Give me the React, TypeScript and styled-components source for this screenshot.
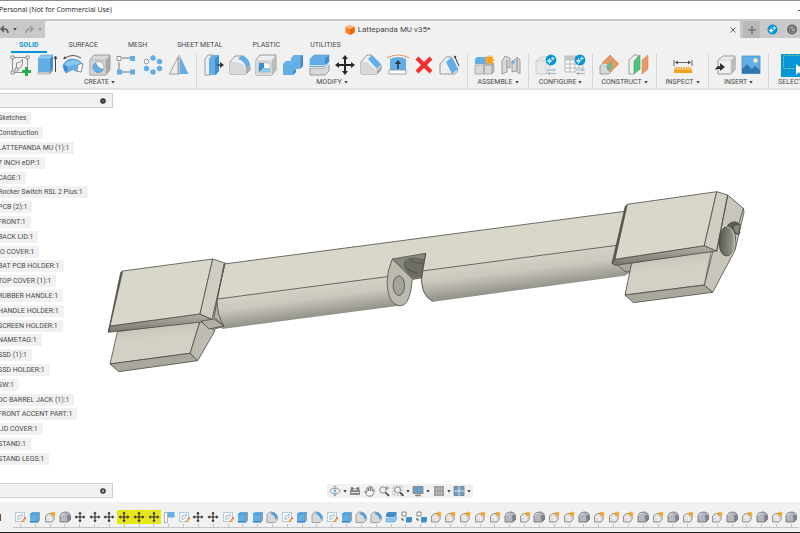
import React from "react";
import styled, { createGlobalStyle, css } from "styled-components";

const Global = createGlobalStyle`
  *, *::before, *::after { box-sizing: border-box; }
  body { margin: 0; background: #fff; overflow: hidden; }
  button { font: inherit; color: inherit; border: 0; padding: 0; margin: 0; background: none; cursor: pointer; }
  svg { display: block; flex: none; }
`;

const Page = styled.div`
  min-height: 100vh;
  display: flex;
  flex-direction: column;
  overflow: hidden;
  border-top: 1px solid #8c8c8c;
  border-bottom: 1px solid #1c1c1c;
  font-family: Roboto, "Liberation Sans", sans-serif;
  font-size: 7px;
  line-height: 12px;
  color: #4a4a4a;
`;

const TitleBar = styled.header`
  height: 18px;
  display: flex;
  align-items: center;
  justify-content: space-between;
  font-family: "Open Sans", "Noto Sans", sans-serif;
  color: #222;
  white-space: nowrap;
`;
const WindowTitle = styled.span`margin-left: -1px;`;
const Minimize = styled.button`
  width: 2px;
  height: 1px;
  background: #555;
`;

const DocBar = styled.div`
  height: 19px;
  display: flex;
  background: #c9c9c9;
  padding-top: 2px;
`;
const History = styled.div`
  width: 45px;
  display: flex;
  align-items: center;
  gap: 4px;
`;
const DocTab = styled.div`
  flex: 1;
  display: flex;
  align-items: center;
  background: #f1f1f1;
  border-radius: 2px 2px 0 0;
  padding-right: 4px;
  font-size: 8px;
`;
const DocName = styled.div`
  flex: 1;
  display: flex;
  align-items: center;
  justify-content: center;
  gap: 3px;
`;
const DocActions = styled.div`
  width: 60px;
  display: flex;
  align-items: center;
  padding-left: 3px;
  gap: 7px;
`;
const NewTab = styled.button`
  width: 17px;
  height: 17px;
  display: grid;
  place-items: center;
  background: #b8b8b8;
  border-radius: 2px 2px 0 0;
`;

const Ribbon = styled.div`
  height: 52px;
  background: #f1f1f1;
  border-bottom: 2px solid #e2e2e2;
  overflow: hidden;
`;
const Tabs = styled.nav`
  height: 15px;
  display: flex;
  gap: 14px;
  padding-left: 11px;
`;
const Tab = styled.button<{ $on?: boolean }>`
  padding: 1px 8px 0;
  height: 15px;
  line-height: 12px;
  white-space: nowrap;
  border-bottom: 2px solid transparent;
  ${(p) => p.$on && css`color: #0696d7; font-weight: 700; border-color: #0696d7;`}
`;
const Groups = styled.div`
  display: flex;
  padding-top: 1px;
`;
const Group = styled.section<{ $w: number }>`
  flex: none;
  width: ${(p) => p.$w}px;
  height: 34px;
  padding: 0 6px;
  border-right: 1px solid #d4d4d4;
  display: flex;
  flex-direction: column;
  align-items: center;
  &:first-child { padding-left: 9px; }
`;
const Tools = styled.div`
  align-self: stretch;
  height: 22px;
  display: flex;
  justify-content: space-between;
  & > :only-child { margin: 0 auto; }
`;
const GroupLabel = styled.button`
  display: flex;
  align-items: center;
  gap: 2px;
  height: 12px;
  white-space: nowrap;
`;
const SelectGroup = styled.section`
  flex: 1;
  min-width: 0;
  padding-left: 9px;
  overflow: hidden;
`;
const SelectTool = styled.button`
  display: block;
  width: 34px;
  height: 24px;
  margin: -1px 0 -1px 3px;
  background: #0696d7;
`;

const Viewport = styled.main`
  flex: 1;
  display: grid;
  grid-template: 1fr / 1fr;
  min-height: 0;
  & > * { grid-area: 1 / 1; min-height: 0; min-width: 0; }
`;
const Scene = styled.svg`
  width: 100%;
  height: 100%;
`;
const Sidebar = styled.aside`
  display: flex;
  flex-direction: column;
  width: 113px;
  padding: 3px 0 4px;
`;
const PanelHead = styled.div`
  height: 15px;
  flex: none;
  display: flex;
  align-items: center;
  justify-content: flex-end;
  padding-right: 6px;
  background: #f1f1f1;
  border: solid #cfcfcf;
  border-width: 1px 1px 1px 0;
`;
const Tree = styled.ul`
  flex: 1;
  list-style: none;
  margin: 3px 0 17px;
  padding: 0;
  display: flex;
  flex-direction: column;
`;
const Node = styled.li`
  flex: 1;
  display: flex;
  align-items: center;
`;
const NodeLabel = styled.button`
  margin-left: -2px;
  padding-right: 5px;
  height: 12px;
  background: #f1f1f1;
  white-space: nowrap;
`;
const NavBar = styled.div`
  align-self: end;
  justify-self: center;
  margin-bottom: 4px;
  width: 146px;
  height: 14px;
  padding: 0 2px;
  display: flex;
  align-items: center;
  justify-content: space-between;
  background: #f1f1f1;
`;
const NavTool = styled.button`
  display: flex;
  align-items: center;
  gap: 2px;
`;

const TimelineBar = styled.footer`
  height: 30px;
  display: flex;
  background: #f1f1f1;
  padding-top: 8px;
`;
const Handle = styled.span`
  width: 1px;
  height: 7px;
  margin: 4px 12px 0 0;
  background: #555;
`;
const Track = styled.div`
  flex: 1;
  height: 18px;
  display: flex;
  margin-right: 1px;
  border-bottom: 1px solid #c4c4c4;
`;
const Step = styled.button<{ $hot?: boolean }>`
  height: 15px;
  min-width: 0;
  display: grid;
  place-items: center;
  background: ${(p) => (p.$hot ? "#e6e619" : "none")};
`;
const StepCell = styled.div`
  flex: 1;
  min-width: 0;
  display: flex;
  flex-direction: column;
  align-items: stretch;
  &::after {
    content: "";
    width: 1px;
    height: 3px;
    margin: 0 auto;
    background: #c4c4c4;
  }
`;

const B = "#62aee6";
const BD = "#3f8dc8";
const BL = "#8cc8f0";
const G = "#d9d9d9";
const GD = "#8c8c8c";
const GL = "#efefef";

const Caret = ({ light }: { light?: boolean }) => (
  <svg width="4" height="3" viewBox="0 0 4 3"><path d="M.300 0h3.400L2 2.700z" fill={light ? "#999" : "#444"} /></svg>
);

const arrows = "M11 1l3 4h-2v5h5V8l4 3-4 3v-2h-5v5h2l-3 4-3-4h2v-5H5v2l-4-3 4-3v2h5V5H8z";
const star = (x: number, y: number, r: number) => (
  <g transform={`translate(${x} ${y})`} stroke="#f7a11b" strokeWidth={r / 3}>
    <path d={`M${-r} 0H${r}M0 ${-r}V${r}M${-r * 0.7} ${-r * 0.7}L${r * 0.7} ${r * 0.7}M${-r * 0.7} ${r * 0.7}L${r * 0.7} ${-r * 0.7}`} />
    <circle r={r * 0.5} fill="#f7a11b" />
  </g>
);
const gear = (
  <g>
    <circle cx="16" cy="6" r="5.400" fill="#0696d7" />
    <circle cx="14.500" cy="7" r="1.500" fill="#fff" />
    <path d="M14.500 4.500v5M12 7h5M17.800 2.800v3.400M16.100 4.500h3.400" stroke="#fff" strokeWidth=".9" />
    <circle cx="14.500" cy="7" r=".6" fill="#0696d7" />
  </g>
);
const sliders = <path d="M12 16h9M12 19.500h9M18.500 14.500v3M14.500 18v3" stroke="#9cb2c2" strokeWidth="1" />;

const glyphs: Record<string, React.ReactNode> = {
  sketch: (
    <g fill="none" stroke="#777" strokeWidth=".8">
      <path d="M5 3.500h12M3.500 5v12M5 18.500h8M18.500 5v8" />
      <path d="M7.500 14V9q4.500-.500 6-3.500V10q-1 4-4.500 5z" />
      <g fill="#fff"><path d="M2 2h3v3H2zM17 2h3v3h-3zM2 17h3v3H2zM6 14h3v3H6z" /></g>
      <path d="M13 17.500h9M17.500 13v9" stroke="#25ae4b" strokeWidth="3" />
    </g>
  ),
  extrude: (
    <g>
      <path d="M2 5l3-4h12l-3 4z" fill={BL} stroke={BD} strokeWidth=".5" />
      <path d="M2 5h12v13H2z" fill={B} />
      <path d="M14 5l3-4v13l-3 4z" fill={BD} />
      <path d="M2 18h12v2H2z" fill={G} stroke={GD} strokeWidth=".5" />
      <path d="M14 18l3-4v2.500l-3 3.500z" fill={GD} />
      <path d="M19.500 18V3M18 5l1.500-3L21 5" stroke="#444" fill="none" />
    </g>
  ),
  revolve: (
    <g>
      <path d="M1 11Q5 4.500 11 5t10 5l-2 8-5-1q-3-3-6 0l-4 2z" fill={B} stroke={BD} strokeWidth=".6" />
      <path d="M3 10q8-7 16-1l-4 2q-4-2-9 2z" fill={BL} />
      <path d="M1 11q4 0 5 3l-2 5q-3-3-3-8z" fill={BD} />
      <path d="M16 11q3-2 5-1l-2 8-4-1z" fill="#fff" stroke="#777" strokeWidth=".7" />
      <path d="M3 4Q11-1 19 4" stroke="#444" fill="none" strokeWidth=".9" /><path d="M1 5l2-3 1 3z" fill="#444" />
    </g>
  ),
  hole: (
    <g>
      <path d="M1 6l4-5h16v15l-4 5H1z" fill={G} stroke={GD} strokeWidth=".8" />
      <path d="M17 6l4-5v15l-4 5z" fill="#a8a8a8" /><path d="M1 6h16v15H1z" fill="#d2d2d2" stroke="#aaa" strokeWidth=".5" />
      <circle cx="9.500" cy="13" r="5.500" fill="#fff" stroke="#888" strokeWidth=".7" />
      <path d="M7 9a5 5 0 1 0 7 6q-5-.500-7-6z" fill={B} stroke={BD} strokeWidth=".5" />
    </g>
  ),
  rect: (
    <g>
      <path d="M4 8v9M7 4h8M7 18h8" stroke="#777" fill="none" /><path d="M2 2.500h4v4H2z" fill="#fff" stroke="#777" strokeWidth=".8" />
      <path d="M15 2h5v5h-5zM15 15.500h5v5h-5zM2 15.500h5v5H2z" fill={B} />
    </g>
  ),
  circ: (
    <g fill={B}>
      <circle cx="11" cy="4" r="2.700" /><circle cx="17.500" cy="7.500" r="2.700" /><circle cx="17.500" cy="14.500" r="2.700" />
      <circle cx="11" cy="18" r="2.700" /><circle cx="4.500" cy="14.500" r="2.700" />
      <circle cx="4.500" cy="7.500" r="2.300" fill="#fff" stroke="#777" strokeWidth=".8" />
    </g>
  ),
  mirror: (
    <g><path d="M10 3v17H1.500z" fill={GL} stroke={GD} strokeWidth=".8" /><path d="M12 2l8.500 18H12z" fill={B} /><path d="M11 1v20" stroke="#888" strokeWidth=".8" /></g>
  ),
  press: (
    <g>
      <path d="M2 5l3-4h5v16l-3 4H2z" fill={GL} stroke={GD} strokeWidth=".8" /><path d="M6 5l3-4h7v16l-3 4H6z" fill={B} />
      <path d="M12 5l4-4v16l-4 4z" fill={BD} /><path d="M14 11h4" stroke="#333" strokeWidth="1.200" /><path d="M17 8l4 3-4 3z" fill="#333" />
    </g>
  ),
  fillet: (
    <g>
      <path d="M1 8l5-6h6q8 3 9 11v3l-4 4H1z" fill={GL} stroke={GD} strokeWidth=".9" />
      <path d="M17 14l4-3v5l-4 4z" fill="#aaa" /><path d="M1 8h6q8 1 10 7v5H1z" fill={G} />
      <path d="M9 5l4-4q7 3 8 10l-4 3q-1-7-8-9z" fill={B} />
    </g>
  ),
  shell: (
    <g>
      <path d="M1 6l4-5h16v15l-4 5H1z" fill={GL} stroke={GD} strokeWidth=".9" /><path d="M17 6l4-5v15l-4 5z" fill="#bbb" />
      <path d="M1 6h16v15H1z" fill={G} /><path d="M4 9h11v9H4z" fill="#fff" stroke="#999" strokeWidth=".5" />
      <path d="M4 9h5v5l-5 4z" fill={BD} /><path d="M4 18l5-4h6v4z" fill={BL} />
    </g>
  ),
  combine: (
    <g><path d="M1 10l3-3h5V4l3-3h9v11l-3 3h-4v3l-3 3H1z" fill={B} /><path d="M18 4l3-3v11l-3 3zM11 18l3-3v3l-3 3z" fill={BD} /><path d="M9 4h9v11M1 10h8V4" fill="none" stroke={BL} strokeWidth=".6" /></g>
  ),
  split: (
    <g>
      <path d="M2 5l4-4h15v7l-4 3H2z" fill={B} stroke={BD} strokeWidth=".5" /><path d="M17 5l4-4v7l-4 3z" fill={BD} />
      <path d="M2 14h15l4-4v7l-4 4H2z" fill={G} stroke={GD} strokeWidth=".8" /><path d="M0 12.500h17l5-4" fill="none" stroke="#fff" strokeWidth="2" />
      <path d="M1 12.500h16l4-4" fill="none" stroke={B} strokeWidth="1" />
    </g>
  ),
  move: <path d={arrows} fill="#262626" />,
  chamfer: (
    <g>
      <path d="M1 8l6-7h4l10 10v5l-4 4H1z" fill={GL} stroke={GD} strokeWidth=".9" /><path d="M1 8h6l10 9v3H1z" fill={G} />
      <path d="M17 16l4-4v4l-4 4z" fill="#aaa" /><path d="M8 5l4-4 9 9-4 5z" fill={B} />
    </g>
  ),
  replace: (
    <g>
      <path d="M0 4q11-6 22 0" fill="none" stroke="#e69a66" strokeWidth="1.200" /><path d="M3 5q8-4 16 0v11H3z" fill={B} />
      <path d="M2 16h17v4H2z" fill="#fff" stroke={GD} strokeWidth=".8" /><path d="M11 15V8" stroke="#333" strokeWidth="1.500" /><path d="M8 10l3-4 3 4z" fill="#333" />
    </g>
  ),
  remove: <path d="M4 4l14 14M18 4L4 18" stroke="#f4302e" strokeWidth="4.200" />,
  draft: (
    <g>
      <path d="M1 10l6-7h5l7 13-3 4H1z" fill={GL} stroke={GD} strokeWidth=".9" /><path d="M7 8l6-5 6 12-6 5z" fill={B} />
      <path d="M16 3l4 9" stroke="#333" strokeWidth="1" /><path d="M14.500 1.500l3 1-1.500 2z" fill="#333" />
    </g>
  ),
  component: (
    <g>
      <path d="M1 5l2-2h9v7H1z" fill={B} /><path d="M1 11h9v9H1zM10 11h8v9h-8z" fill={G} stroke="#999" strokeWidth=".7" />
      <path d="M18 11l2-2v9l-2 2zM10 11l2-2h8l-2 2z" fill="#bbb" stroke="#999" strokeWidth=".5" />{star(15.5, 6, 4.8)}
    </g>
  ),
  joint: (
    <g>
      <path d="M2 7l3-5 5 2v10l-3-1v5l-5 2z" fill={G} stroke={GD} strokeWidth=".8" /><path d="M12 9l5-6 3 3v14l-4-3-4 1z" fill={G} stroke={GD} strokeWidth=".8" />
      <path d="M7 6v7M17 5v12" stroke="#999" strokeWidth="1.300" /><circle cx="13" cy="8" r="1.800" fill={B} />
    </g>
  ),
  config: <g><path d="M1 7l5-4h9v13l-4 4H1z" fill="#e8e8e8" stroke="#c8c8c8" strokeWidth=".8" /><path d="M1 7h10v13" fill="none" stroke="#d0d0d0" />{sliders}{gear}</g>,
  table: <g><path d="M1 2h18v16H1zM1 6h18M1 10h18M1 14h18M6 6v12M11 6v12M15 6v12" fill="#f7f7f7" stroke="#b5b5b5" strokeWidth=".9" /><path d="M1 2h18v4H1z" fill="#c6c6c6" /><path d="M12 15h10v6H12z" fill="#f1f1f1" />{sliders}{gear}</g>,
  plane: (
    <g><path d="M1 12l4-4h8v9l-3 3H1z" fill={G} stroke={GD} strokeWidth=".8" /><path d="M3 9l8-8 9 9-9 8-3-3 3-5z" fill="#e59a68" stroke="#d4804a" strokeWidth=".6" /><path d="M7 12l6-5v7l-4 3z" fill="#69b98a" /></g>
  ),
  mid: (
    <g><path d="M1 6l5-5h4v15l-5 4H1z" fill={GL} stroke={GD} strokeWidth=".8" /><path d="M6 7l6-6v14l-6 5z" fill="#4fc37d" stroke="#3d9d62" strokeWidth=".6" /><path d="M14 6l6-5v14l-6 5z" fill="#e59a68" stroke="#d4804a" strokeWidth=".5" /></g>
  ),
  measure: (
    <g><path d="M2 6v6M20 6v6M3 8.500h16" stroke="#555" strokeWidth=".9" /><path d="M3 8.500l3-2v4zM19 8.500l-3-2v4z" fill="#555" /><path d="M2 13h18v3H2z" fill="#fbd98e" /><path d="M2 15.500h18V19H2z" fill="#f2a01d" /><path d="M4.500 13v2M7 13v2M9.500 13v2M12 13v2M14.500 13v2M17 13v2" stroke="#b97b1c" strokeWidth=".6" /></g>
  ),
  insert: (
    <g><path d="M3 6l5-4h12v14l-4 4H3z" fill={GL} stroke={GD} strokeWidth=".9" /><path d="M16 6l4-4v14l-4 4z" fill="#bbb" /><path d="M3 6h13v14" fill="none" stroke="#ccc" strokeWidth=".8" /><path d="M0 16q1-4 5-4V9l5 4-5 4v-2q-3-.500-5 1z" fill="#333" /></g>
  ),
  picture: (
    <g><path d="M2 2h18v17.500H2z" fill={B} stroke="#4a95cd" strokeWidth=".8" /><path d="M2 15l5-5 5 5 3-3 5 4v3.500H2z" fill="#2f78ad" /><circle cx="15.500" cy="6.500" r="2.200" fill="#fff5c4" /></g>
  ),
};

const Icon = ({ name, size = 22 }: { name: string; size?: number }) => (
  <svg width={size} height={size} viewBox="0 0 22 22" aria-hidden="true">{glyphs[name]}</svg>
);

const groups = [
  { label: "CREATE", w: 197, tools: ["sketch", "extrude", "revolve", "hole", "rect", "circ", "mirror"] },
  { label: "MODIFY", w: 271, tools: ["press", "fillet", "shell", "combine", "split", "move", "chamfer", "replace", "remove", "draft"] },
  { label: "ASSEMBLE", w: 61, tools: ["component", "joint"] },
  { label: "CONFIGURE", w: 64, tools: ["config", "table"] },
  { label: "CONSTRUCT", w: 64, tools: ["plane", "mid"] },
  { label: "INSPECT", w: 52, tools: ["measure"] },
  { label: "INSERT", w: 60, tools: ["insert", "picture"] },
];

const nodes = [
  "Sketches", "Construction", "LATTEPANDA MU (1):1", "7 INCH eDP:1", "CAGE:1", "Rocker Switch RSL 2 Plus:1",
  "PCB (2):1", "FRONT:1", "BACK LID:1", "IO COVER:1", "BAT PCB HOLDER:1", "TOP COVER (1):1", "RUBBER HANDLE:1",
  "HANDLE HOLDER:1", "SCREEN HOLDER:1", "NAMETAG:1", "SSD (1):1", "SSD HOLDER:1", "SW:1", "DC BARREL JACK (1):1",
  "FRONT ACCENT PART:1", "LID COVER:1", "STAND:1", "STAND LEGS:1",
];

const stepGlyphs: Record<string, { name: string; art: React.ReactNode }> = {
  s: { name: "Sketch", art: <g><path d="M1.500 1.500h9v9h-9z" fill="#fafafa" stroke="#8cb8da" strokeDasharray="2 1" /><path d="M4 8.500V5q3 0 4-2v3q-1 2-4 2.500z" fill="none" stroke="#7d9db5" strokeWidth=".7" /><path d="M7 10.500l3-3.500 1.500 1.500-3 3z" fill="#f2a64a" /><path d="M10 7l1-1 1.300 1.300-1 1z" fill="#e0523f" /></g> },
  e: { name: "Extrude", art: <g><path d="M1 3l2-2h8v8l-2 2.500H1z" fill={B} /><path d="M1 3h8l2-2M9 3v8" fill="none" stroke={BD} strokeWidth=".8" /><path d="M1 10h8v1.500H1z" fill={BD} /><path d="M9 3l2-2v8l-2 2.500z" fill="#8fa1b0" /></g> },
  g: { name: "New component", art: <g><path d="M1.500 5l3-2.500H9q2 3 1 6l-2 2.500H1.500z" fill="#dedede" stroke="#8a8a8a" strokeWidth=".9" /><path d="M3 6h3.500v4" fill="none" stroke="#fff" strokeWidth=".8" />{star(9, 3, 2.6)}</g> },
  b: { name: "Body", art: <g><path d="M1 5q1-4 5-4 5 0 5.500 4v3.500L9 11H1z" fill="#b3b7c1" stroke="#777" strokeWidth=".9" /><path d="M8 4q3-.500 3.500 1v3.500L8.500 11z" fill="#7d828c" /><path d="M2 5q1-3 3.500-3" stroke="#e2e4e8" fill="none" /></g> },
  m: { name: "Move", art: <g transform="scale(.545)"><path d={arrows} fill="#262626" /></g> },
  p: { name: "Plane", art: <g><path d="M1.500 1.500h3v10h-3z" fill="#fff" stroke="#9a9a9a" strokeWidth=".8" /><path d="M5 1h6.500v5.500H5z" fill={B} /></g> },
  f: { name: "Fillet", art: <g><path d="M1 4l2.500-3H6q5 1 5.500 6v2L9 11.500H1z" fill="#dadada" stroke="#909090" strokeWidth=".8" /><path d="M4.500 3l1.500-2q5 1 5.500 6L9.500 8.500Q9 4 4.500 3z" fill="#4b9fdc" /></g> },
  x: { name: "Split", art: <g><path d="M1 3l2-2h8.500v3l-2 2H1z" fill={BD} /><path d="M1 8l2-1h6.500l2-2v3.500l-2 2.500H1z" fill={BL} stroke={BD} strokeWidth=".5" /></g> },
  c: { name: "Copy", art: <g><path d="M2 1h4v4H2z" fill="#fff" stroke="#777" strokeWidth=".9" /><path d="M6 7l1-1h5v4l-1 1.500H6z" fill={BD} /><path d="M2 7v2h2" fill="none" stroke="#444" /></g> },
};
const timeline = "segbmmmMMMpsmmseefsefseffxccgggggbgbggbgggbgbgbgbgbgb".split("");

const nav: { name: string; menu?: boolean; art: React.ReactNode }[] = [
  { name: "Orbit", menu: true, art: <g fill="none" stroke="#888" strokeWidth=".8"><ellipse cx="6" cy="6" rx="5" ry="2.500" /><path d="M4.500 2.500L6 .800l1.500 1.700M4.500 9.500L6 11.200l1.500-1.700M6 1v3M6 8v3" /><circle cx="6" cy="6" r="1.300" fill={B} stroke="none" /></g> },
  { name: "Look at", art: <g><path d="M1 5h10v5H1z" fill="#898989" /><path d="M2 2.500h2V5H2zM8 2.500h2V5H8zM4 3.500h4" fill="#777" stroke="#777" strokeWidth=".6" /><path d="M2 7.500h8" stroke="#ddd" /></g> },
  { name: "Pan", art: <path d="M3.500 11Q1 8 1 6l2 1.500V3q1-1 1.300 0V6L5 1.500q1-1 1.300 0V6l1-4q1-.500 1 .500L8 6.500l1.500-2q1-.200.800.800L9 9.500 8 11z" fill="#fff" stroke="#666" strokeWidth=".8" /> },
  { name: "Zoom", art: <g><circle cx="5" cy="5" r="3.200" fill="#e9f1f6" stroke="#888" /><path d="M7.500 7.500l3.500 3.500" stroke="#444" strokeWidth="1.700" /><path d="M9 1v4M7.500 3h4" stroke="#777" strokeWidth=".7" /></g> },
  { name: "Fit", menu: true, art: <g><path d="M1 1h9v9H1z" fill="none" stroke="#999" strokeWidth=".7" strokeDasharray="2 1" /><circle cx="5.500" cy="5" r="3" fill="#e9f1f6" stroke="#888" /><path d="M8 7.500l3.500 3.500" stroke="#444" strokeWidth="1.700" /></g> },
  { name: "Display", menu: true, art: <g><path d="M1 1.500h10v7H1z" fill="#6e9cc3" stroke="#888" strokeWidth=".9" /><path d="M3 10.500h6M6 9v2" stroke="#888" strokeWidth="1.300" /></g> },
  { name: "Grid", menu: true, art: <g><path d="M1 1h10v10H1z" fill="#959595" /><path d="M3.500 1v10M6 1v10M8.500 1v10M1 4h10M1 8h10" stroke="#d4d4d4" strokeWidth=".6" /></g> },
  { name: "Viewports", menu: true, art: <g><path d="M1 1.500h10v9H1z" fill="#6e9cc3" stroke="#70777d" strokeWidth=".8" /><path d="M6 1v10M1 6h10" stroke="#e6edf2" strokeWidth=".9" /></g> },
];

const Model = () => (
  <Scene viewBox="0 90 800 412" role="img" aria-label="3D model of the stand">
    <defs>
      <linearGradient id="tube" gradientUnits="userSpaceOnUse" x1="500" y1="260" x2="504" y2="292">
        <stop offset="0" stopColor="#d4d2c7" /><stop offset=".4" stopColor="#cbc9be" /><stop offset="1" stopColor="#93928a" />
      </linearGradient>
      <linearGradient id="tubeLeft" gradientUnits="userSpaceOnUse" x1="300" y1="288" x2="304" y2="318">
        <stop offset="0" stopColor="#d4d2c7" /><stop offset=".4" stopColor="#cbc9be" /><stop offset="1" stopColor="#93928a" />
      </linearGradient>
      <linearGradient id="under" x1="0" y1="0" x2="0" y2="1"><stop offset="0" stopColor="#b5b3a8" /><stop offset="1" stopColor="#76756c" /></linearGradient>
      <linearGradient id="block" x1="0" y1="0" x2=".2" y2="1"><stop offset="0" stopColor="#bfbdb2" /><stop offset=".5" stopColor="#d3d1c5" /></linearGradient>
      <linearGradient id="bore" x1="0" y1="0" x2="1" y2="0"><stop offset="0" stopColor="#55554f" /><stop offset=".8" stopColor="#92918a" /><stop offset="1" stopColor="#c0beb4" /></linearGradient>
    </defs>
    <g stroke="#4b4b46" strokeWidth=".8" strokeLinejoin="round">
      <path d="M218 298.500L388 276l13 29.500L222 329l-5-9z" fill="url(#tubeLeft)" stroke="none" />
      <path d="M422 271l195-26 14 27-6 3.700-191.700 26Q424 298 421.500 286t.500-15z" fill="url(#tube)" stroke="none" />
      <path d="M224 264l403-53-10 34.300-195 26 3.700-18L392.300 259l-4.600 17.600L217.500 299z" fill="#d9d7ca" stroke="none" />
      <path d="M224 264l403-53M217.500 299l170-22.400M422 271l195-25.700" fill="none" />
      <path d="M392.300 259l33.400-5.700-4 24.500-8.500 1.500z" fill="#8a8980" />
      <path d="M404 264q5-7 17-4l3-1-2 18-9 1q-9-7-9-14z" fill="#6f6e66" stroke="none" />
      <path d="M423.500 260q-15-5-19.500 3 1 8 14 10M409 259q5 5 14 4" fill="none" />
      <path d="M392.300 259Q387 271 387 283q1 21 12 22.700 11 1.300 13-25l1-1.400z" fill="#bdbbb0" />
      <ellipse cx="398.800" cy="285.700" rx="5.700" ry="9.800" fill="#a4a39b" />
      <path d="M425.700 253.300l-3.700 18q-1.500 10 1 18t10 12.300" fill="none" />

      <path d="M225 263l-8 36q0 17 7 27l-12 4-10-9 10-6z" fill="#b4b2a8" />
      <path d="M200 321l15 9.700-17.300 30-7.700-7.400z" fill="#bebcb1" />
      <path d="M117.500 331.500L200 320.500l-10 32.800L110 364z" fill="url(#block)" />
      <path d="M110 364l80-10.700 7.700 7.400-79 11z" fill="#aaa89c" />
      <path d="M110 326l90-12 12 5.300-4 2-99.700 11z" fill="url(#under)" />
      <path d="M122.700 271l-2 1.500-12.400 59.500 1.700-6z" fill="#5b5b55" />
      <path d="M122.700 271l90-12L200 314l-90 12z" fill="#d9d7ca" />
      <path d="M212.700 259l12.300 4-13 56.300L200 314z" fill="#d0cec2" />
      <path d="M224 264l-10 53 10 9" fill="none" />
      <path d="M201 321l8 8 15-3-10-7z" fill="#b2b0a6" />

      <path d="M616 264l10 8 7-1 2-12z" fill="#aaa89e" />
      <path d="M727.700 195l15.600 13.300.7 4-4 17-5 21-22.300 42-8.400-7.300 9-35z" fill="#c8c6ba" />
      <path d="M631.700 263l80-13-7.400 35L625 295z" fill="url(#block)" />
      <path d="M625 295l79.300-10 8.400 7.300-79.400 10.400z" fill="#aaa89c" />
      <path d="M615 259.300l89.300-13.600 12.400 5.300L615 265.300l-3-2z" fill="url(#under)" />
      <path d="M627.300 204.300l-2 2L612 263.300l3-4z" fill="#5b5b55" />
      <path d="M627.300 204.300l89.400-12.600-12.400 54L615 259.300z" fill="#d9d7ca" />
      <path d="M716.700 191.700l11 3.300-11 56-12.400-5.300z" fill="#d0cec2" />
      <path d="M725 229q6-10 13-6l2 10q-3 3-6-1z" fill="#5d5c55" />
      <path d="M733 227q3-3 7-3l-1 10q-5 0-6-7z" fill="#87857c" />
      <ellipse cx="727.300" cy="241" rx="8.300" ry="15" fill="url(#bore)" transform="rotate(4 727.300 241)" />
      <path d="M725 226q9 1 10 16-1 10-5 14" fill="none" stroke="#d0cec4" />
      <path d="M727.700 195l-11 56M743.300 208.300l-5 17" fill="none" />
    </g>
  </Scene>
);

export default function App() {
  return (
    <Page>
      <Global />
      <TitleBar>
        <WindowTitle>Personal (Not for Commercial Use)</WindowTitle>
        <Minimize aria-label="Minimize" />
      </TitleBar>
      <DocBar>
        <History>
          <button aria-label="Undo"><svg width="9" height="10" viewBox="0 0 9 10"><path d="M1 4h4q3 .500 3 4M4 1L1 4l3 3" fill="none" stroke="#555" strokeWidth="1.400" /></svg></button>
          <button aria-label="Undo history"><Caret /></button>
          <span />
          <button aria-label="Redo"><svg width="9" height="10" viewBox="0 0 9 10"><path d="M8 4H4Q1 4.500 1 8M5 1l3 3-3 3" fill="none" stroke="#999" strokeWidth="1.400" /></svg></button>
          <button aria-label="Redo history"><Caret light /></button>
        </History>
        <DocTab>
          <DocName>
            <svg width="10" height="10" viewBox="0 0 10 10"><path d="M5 0l4.500 2v5.500L5 10 .500 7.500V2z" fill="#ff7a1c" /><path d="M5 0l4.500 2L5 4.500.500 2z" fill="#ffb57c" /><path d="M5 4.500L9.500 2v5.500L5 10z" fill="#f26000" /></svg>
            Lattepanda MU v35*
          </DocName>
          <button aria-label="Close document"><svg width="6" height="6" viewBox="0 0 6 6"><path d="M.500.500l5 5M5.500.500l-5 5" stroke="#666" strokeWidth="1" /></svg></button>
        </DocTab>
        <DocActions>
          <NewTab aria-label="New design"><svg width="8" height="8" viewBox="0 0 8 8"><path d="M4 0v8M0 4h8" stroke="#777" strokeWidth="1.600" /></svg></NewTab>
          <button aria-label="Extensions"><svg width="11" height="11" viewBox="0 0 11 11"><circle cx="5.500" cy="5.500" r="5" fill="#0696d7" /><circle cx="4.200" cy="6.500" r="1.400" fill="#fff" /><path d="M4.200 4.300v4.400M2 6.500h4.400M7.300 2.500v3.200M5.700 4.100h3.200" stroke="#fff" strokeWidth=".9" fill="none" /></svg></button>
          <button aria-label="Job status"><svg width="13" height="11" viewBox="0 0 13 11"><circle cx="7" cy="5.500" r="5" fill="#666" /><circle cx="7" cy="5.500" r="3" fill="none" stroke="#aaa" strokeWidth=".8" /><path d="M7 3v3h2.500" stroke="#ddd" strokeWidth=".9" fill="none" /></svg></button>
        </DocActions>
      </DocBar>
      <Ribbon>
        <Tabs>
          {["SOLID", "SURFACE", "MESH", "SHEET METAL", "PLASTIC", "UTILITIES"].map((t, i) => <Tab key={t} $on={i === 0}>{t}</Tab>)}
        </Tabs>
        <Groups>
          {groups.map((g) => (
            <Group key={g.label} $w={g.w}>
              <Tools>{g.tools.map((t) => <button key={t} aria-label={t}><Icon name={t} /></button>)}</Tools>
              <GroupLabel>{g.label} <Caret /></GroupLabel>
            </Group>
          ))}
          <SelectGroup>
            <SelectTool aria-label="Select">
              <svg width="34" height="24" viewBox="0 0 34 24"><path d="M2.500 2.500h29v13h-29z" fill="none" stroke="#63c391" strokeDasharray="3 1" /><path d="M15 11v11l3-3 2 4 2-1-2-4h4z" fill="#fff" /></svg>
            </SelectTool>
            <GroupLabel>SELECT <Caret /></GroupLabel>
          </SelectGroup>
        </Groups>
      </Ribbon>
      <Viewport>
        <Model />
        <Sidebar>
          <PanelHead>
            <button aria-label="Collapse browser"><svg width="6" height="6" viewBox="0 0 6 6"><circle cx="3" cy="3" r="2.800" fill="#333" /><path d="M1.500 3h3" stroke="#aaa" strokeWidth=".8" /></svg></button>
          </PanelHead>
          <Tree>{nodes.map((n) => <Node key={n}><NodeLabel>{n}</NodeLabel></Node>)}</Tree>
          <PanelHead>
            <button aria-label="Expand comments"><svg width="6" height="6" viewBox="0 0 6 6"><circle cx="3" cy="3" r="2.800" fill="#333" /><path d="M1.500 3h3M3 1.500v3" stroke="#ccc" strokeWidth=".9" /></svg></button>
          </PanelHead>
        </Sidebar>
        <NavBar>
          {nav.map((n) => (
            <NavTool key={n.name} aria-label={n.name}>
              <svg width="12" height="12" viewBox="0 0 12 12">{n.art}</svg>
              {n.menu && <Caret />}
            </NavTool>
          ))}
        </NavBar>
      </Viewport>
      <TimelineBar>
        <Handle />
        <Track>
          {timeline.map((k, i) => {
            const g = stepGlyphs[k.toLowerCase()];
            return (
              <StepCell key={i}>
                <Step $hot={k === "M"} aria-label={g.name}><svg width="12" height="12" viewBox="0 0 12 12">{g.art}</svg></Step>
              </StepCell>
            );
          })}
        </Track>
      </TimelineBar>
    </Page>
  );
}
